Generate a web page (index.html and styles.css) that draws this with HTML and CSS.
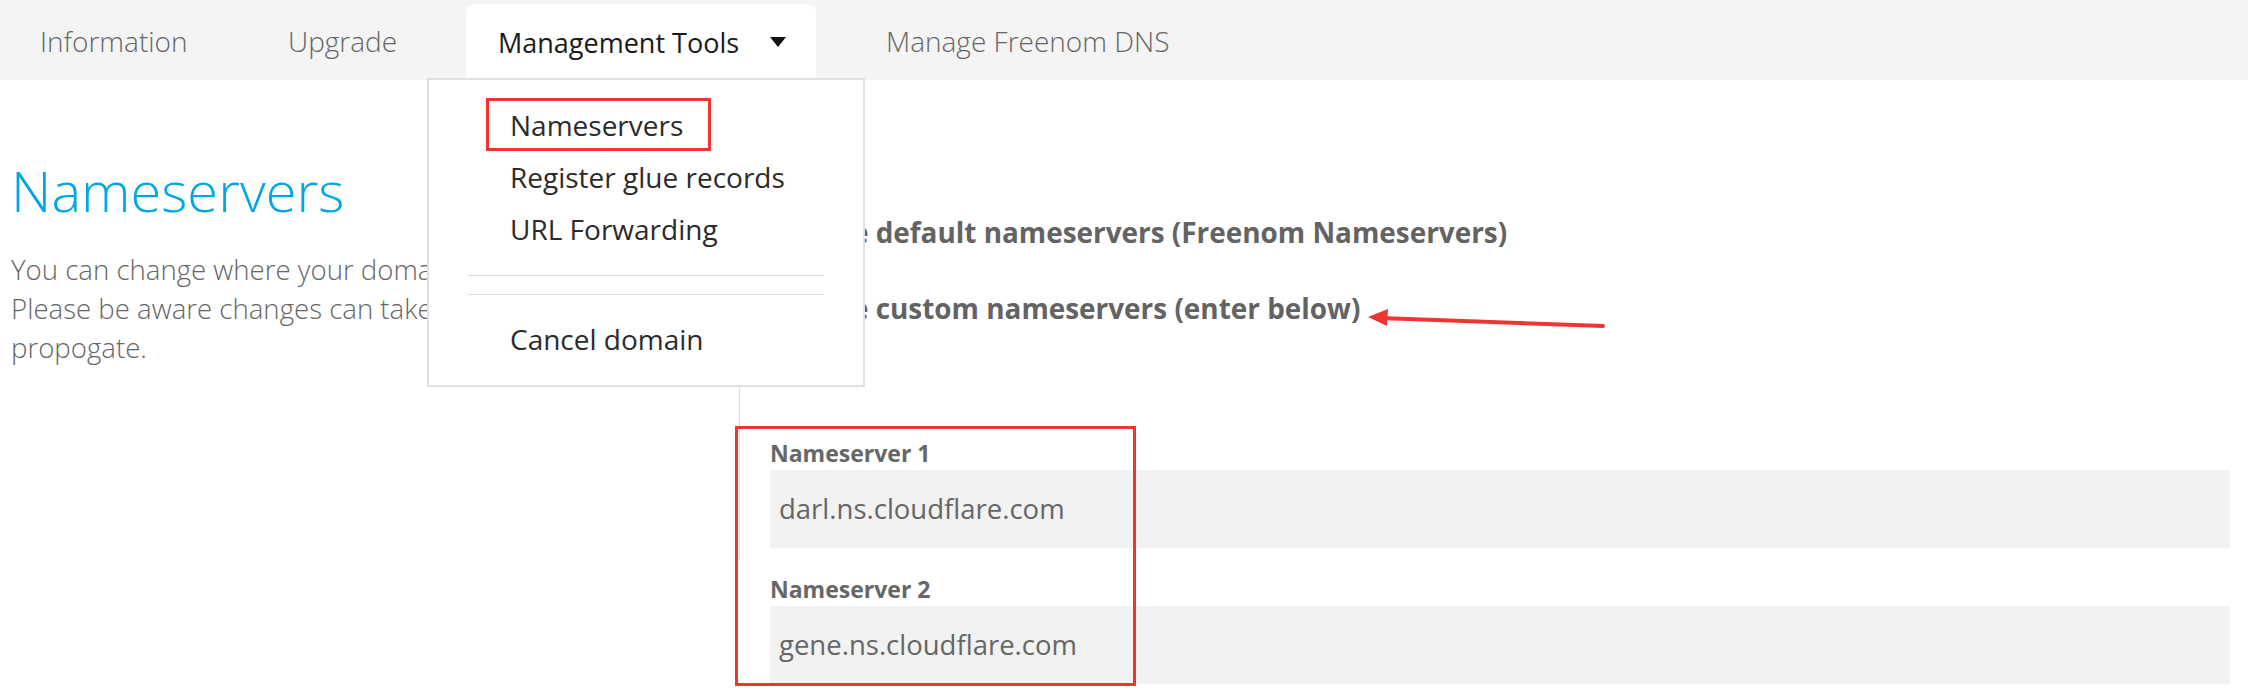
FILE: index.html
```html
<!DOCTYPE html>
<html lang="en">
<head>
<meta charset="utf-8">
<title>Nameservers</title>
<link rel="stylesheet" href="styles.css">
</head>
<body>
<div class="page">
  <nav class="tabs">
    <a class="tab tab-info">Information</a>
    <a class="tab tab-upgrade">Upgrade</a>
    <a class="tab tab-active">Management Tools <span class="caret"></span></a>
    <a class="tab tab-dns">Manage Freenom DNS</a>
  </nav>

  <main class="content">
    <section class="intro">
      <h1 class="title">Nameservers</h1>
      <p class="desc">You can change where your domain points to here.<br>Please be aware changes can take up to 24 hours to<br>propogate.</p>
    </section>
    <section class="settings">
      <label class="choice"><span class="radio"></span>Use default nameservers (Freenom Nameservers)</label>
      <label class="choice"><span class="radio"></span>Use custom nameservers (enter below)</label>
      <div class="fields">
        <div class="field">
          <div class="field-label">Nameserver 1</div>
          <div class="field-input">darl.ns.cloudflare.com</div>
        </div>
        <div class="field">
          <div class="field-label">Nameserver 2</div>
          <div class="field-input">gene.ns.cloudflare.com</div>
        </div>
      </div>
    </section>
  </main>

  <div class="dropdown">
    <div class="dd-item">Nameservers</div>
    <div class="dd-item">Register glue records</div>
    <div class="dd-item">URL Forwarding</div>
    <div class="dd-sep first"></div>
    <div class="dd-sep"></div>
    <div class="dd-item">Cancel domain</div>
  </div>

  <div class="mark mark-menu"></div>
  <div class="mark mark-fields"></div>
  <svg class="arrow" width="2248" height="694" viewBox="0 0 2248 694">
    <line x1="1603" y1="326" x2="1380" y2="318" stroke="#ee3532" stroke-width="4" stroke-linecap="round"/>
    <polygon points="1368,317 1388,309 1387,326" fill="#ee3532"/>
  </svg>
</div>
</body>
</html>
```

FILE: styles.css
```css
html, body {
  margin: 0;
  padding: 0;
  background: #ffffff;
}

body {
  font-family: "Open Sans", "Liberation Sans", sans-serif;
  color: #666666;
}

.page {
  position: relative;
  width: 2248px;
  height: 694px;
  overflow: hidden;
}

/* ---------- tabs ---------- */
.tabs {
  display: flex;
  height: 80px;
  background: #f4f4f4;
  align-items: stretch;
}

.tab {
  display: flex;
  align-items: center;
  box-sizing: border-box;
  padding-top: 2px;
  font-size: 28px;
  font-weight: 300;
  color: #666666;
  white-space: nowrap;
}

.tab-info {
  width: 253px;
  padding-left: 40px;
}

.tab-upgrade {
  width: 213px;
  padding-left: 35px;
}

.tab-active {
  width: 350px;
  margin-top: 4px;
  padding-top: 0;
  padding-left: 32px;
  padding-right: 30px;
  background: #ffffff;
  border-radius: 8px 8px 0 0;
  color: #1a1a1a;
  font-weight: 400;
  font-size: 27px;
}

.caret {
  margin-left: auto;
  width: 0;
  height: 0;
  border-left: 8px solid transparent;
  border-right: 8px solid transparent;
  border-top: 10px solid #111111;
}

.tab-dns {
  padding-left: 70px;
}

/* ---------- content ---------- */
.content {
  display: flex;
}

.intro {
  width: 739px;
  box-sizing: border-box;
  padding-left: 11px;
}

.title {
  margin: 78px 0 0 0;
  font-size: 56px;
  line-height: 64px;
  font-weight: 300;
  color: #00a6e6;
}

.desc {
  margin: 28px 0 0 0;
  font-size: 27.6px;
  line-height: 39px;
  font-weight: 300;
  color: #666666;
}

.settings {
  flex: 1;
  border-left: 1px solid #dddddd;
  padding: 134px 18px 0 30px;
  height: 346px;
}

.choice {
  display: flex;
  align-items: center;
  height: 36px;
  margin-left: 13px;
  font-size: 27.9px;
  font-weight: 700;
  color: #636363;
  white-space: nowrap;
}

.choice + .choice {
  margin-top: 40px;
}

.radio {
  width: 18px;
  height: 18px;
  border: 1px solid #999999;
  border-radius: 50%;
  margin-right: 14px;
}

.fields {
  margin-top: 112px;
}

.field + .field {
  margin-top: 26px;
}

.field-label {
  font-size: 23px;
  line-height: 30px;
  font-weight: 700;
  color: #666666;
}

.field-input {
  margin-top: 2px;
  height: 78px;
  line-height: 78px;
  padding-left: 9px;
  background: #f2f2f2;
  font-size: 27.5px;
  color: #666666;
}

/* ---------- dropdown ---------- */
.dropdown {
  position: absolute;
  left: 427px;
  top: 78px;
  width: 438px;
  height: 309px;
  box-sizing: border-box;
  border: 2px solid #e0e0e0;
  background: #ffffff;
  padding: 19px 0 20px 0;
}

.dd-item {
  padding-left: 81px;
  font-size: 28px;
  line-height: 52px;
  color: #2b2b2b;
  white-space: nowrap;
}

.dd-sep {
  margin: 0 39px 0 39px;
  height: 1px;
  background: #dedede;
}

.dd-sep.first {
  margin-top: 20px;
  margin-bottom: 18px;
}

.dd-sep + .dd-item {
  margin-top: 18px;
}

/* ---------- annotations ---------- */
.mark {
  position: absolute;
  box-sizing: border-box;
  border: 3px solid #ee3532;
}

.mark-menu {
  left: 486px;
  top: 98px;
  width: 225px;
  height: 53px;
}

.mark-fields {
  left: 735px;
  top: 426px;
  width: 401px;
  height: 260px;
}

.arrow {
  position: absolute;
  left: 0;
  top: 0;
  pointer-events: none;
}
```
